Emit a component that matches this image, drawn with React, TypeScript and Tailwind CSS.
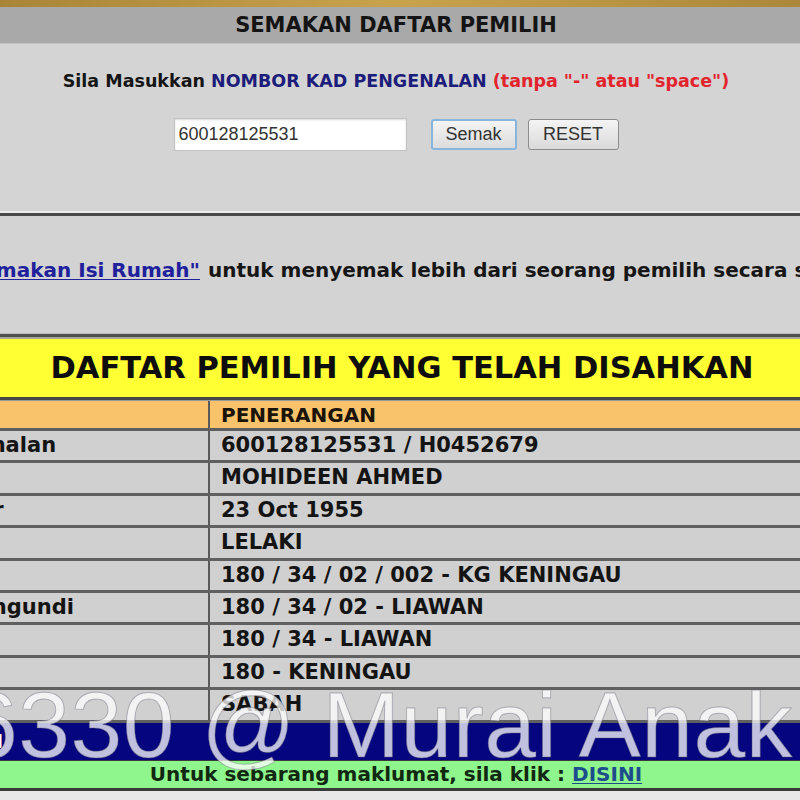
import React from "react";

const rows: [string, string][] = [
  ["Kad Pengenalan", "600128125531 / H0452679"],
  ["Nama", "MOHIDEEN AHMED"],
  ["Tarikh Lahir", "23 Oct 1955"],
  ["Jantina", "LELAKI"],
  ["Lokaliti", "180 / 34 / 02 / 002 - KG KENINGAU"],
  ["Daerah Mengundi", "180 / 34 / 02 - LIAWAN"],
  ["DUN", "180 / 34 - LIAWAN"],
  ["Parlimen", "180 - KENINGAU"],
  ["Negeri", "SABAH"],
];

export default function App() {
  return (
    <div className="relative w-[800px] h-[800px] overflow-hidden bg-[#e6e6e6] font-['DejaVu_Sans',sans-serif]">
      <div className="w-[1098px] -ml-[153px] flex flex-col">
        {/* gold strip */}
        <div className="h-[7px] bg-gradient-to-r from-[#9c7a30] via-[#c9a24c] to-[#a07e34]" />
        {/* header */}
        <div className="h-[36px] bg-[#a9a9a9] flex items-center justify-center">
          <span className="font-bold text-[21px] text-[#141414] leading-none">SEMAKAN DAFTAR PEMILIH</span>
        </div>
        <div className="h-[1px] bg-[#c4c4c4]" />
        {/* form panel */}
        <div className="h-[167px] bg-[#d4d4d4] flex flex-col items-center pt-[27px]">
          <p className="font-bold text-[17.5px] leading-[21px] whitespace-nowrap">
            <span className="text-[#151515]">Sila Masukkan </span>
            <span className="text-[#1c1c7a]">NOMBOR KAD PENGENALAN </span>
            <span className="text-[#e3232c]">(tanpa "-" atau "space")</span>
          </p>
          <div className="mt-[26px] flex items-center">
            <div className="w-[233px] h-[33px] bg-white border border-[#c2c2c2] shadow-[inset_0_1px_2px_rgba(0,0,0,0.15)] flex items-center pl-[4px]">
              <span className="font-['Liberation_Sans',sans-serif] text-[18px] text-[#333]">600128125531</span>
            </div>
            <button className="ml-[24px] w-[86px] h-[31px] rounded-[3px] border-2 border-[#86b6de] bg-gradient-to-b from-[#f4f4f4] to-[#dcdcdc] font-['Liberation_Sans',sans-serif] text-[18px] text-[#333]">
              Semak
            </button>
            <button className="ml-[11px] w-[91px] h-[31px] rounded-[3px] border border-[#8c8c8c] bg-gradient-to-b from-[#f4f4f4] to-[#dadada] font-['Liberation_Sans',sans-serif] text-[18px] text-[#333]">
              RESET
            </button>
          </div>
        </div>
        <div className="h-[2px] bg-[#ececec]" />
        <div className="h-[3px] bg-[#4a4a4a]" />
        {/* info panel */}
        <div className="h-[117px] bg-[#d3d3d3] pt-[42px]">
          <div className="flex whitespace-nowrap font-bold text-[20px] leading-[24px]">
            <div className="w-[353px] shrink-0 flex justify-end">
              <span className="whitespace-nowrap text-[#20209c] underline decoration-1 underline-offset-2">
                Sila klik "Semakan Isi Rumah"
              </span>
            </div>
            <span className="pl-[8px] text-[#161616]">
              untuk menyemak lebih dari seorang pemilih secara serentak.
            </span>
          </div>
        </div>
        <div className="h-[1px] bg-[#bdbdbd]" />
        <div className="h-[3px] bg-[#4f4f4f]" />
        <div className="h-[2px] bg-[#a7a79a]" />
        {/* yellow banner */}
        <div className="h-[58px] bg-[#ffff33] flex items-center justify-center pl-[12px]">
          <span className="font-bold text-[30.5px] text-[#0d0d0d] leading-none">DAFTAR PEMILIH YANG TELAH DISAHKAN</span>
        </div>
        <div className="h-[3px] bg-[#474747]" />
        <div className="h-[1px] bg-[#9a9a9a]" />
        {/* table header */}
        <div className="h-[30px] flex bg-[#f9c36b] border-b-[3px] border-[#5e5e5e] font-bold text-[20px] text-[#1a1408]">
          <div className="w-[363px] shrink-0 border-r-2 border-[#5a5a5a] pl-[17px] flex items-center">PERKARA</div>
          <div className="flex items-center pl-[11px]">PENERANGAN</div>
        </div>
        {rows.map(([k, v]) => (
          <div
            key={k}
            className="h-[32.4px] flex bg-[#d0d0d0] border-b-[3px] border-[#606060] font-bold text-[21px] text-[#141414]"
          >
            <div className="w-[363px] shrink-0 border-r-2 border-[#5a5a5a] pl-[17px] flex items-center whitespace-nowrap">{k}</div>
            <div className="flex items-center pl-[11px] whitespace-nowrap">{v}</div>
          </div>
        ))}
        {/* blue band */}
        <div className="h-[37px] bg-[#05057f] flex items-center pl-[21px] font-bold text-[18px] text-white">
          Status Rekod
        </div>
        <div className="h-[1px] bg-[#3a3a3a]" />
        {/* green band */}
        <div className="h-[27px] bg-[#8ff58d] flex items-center justify-center font-bold text-[20px] text-[#102810] leading-none">
          <span>
            Untuk sebarang maklumat, sila klik :{" "}
            <span className="text-[#1d4e8c] underline decoration-1 underline-offset-2">DISINI</span>
          </span>
        </div>
        <div className="h-[3px] bg-[#3a3a3a]" />
        <div className="h-[20px] bg-[#e8e8e8]" />
      </div>
      {/* watermark */}
      <div className="absolute left-[-34px] top-[679px] whitespace-nowrap font-['Liberation_Sans',sans-serif] text-[93px] tracking-[0.5px] leading-none text-white/75 [-webkit-text-stroke:1px_rgba(90,90,110,0.4)] pointer-events-none">
        6330 @ Murai Anak
      </div>
    </div>
  );
}
